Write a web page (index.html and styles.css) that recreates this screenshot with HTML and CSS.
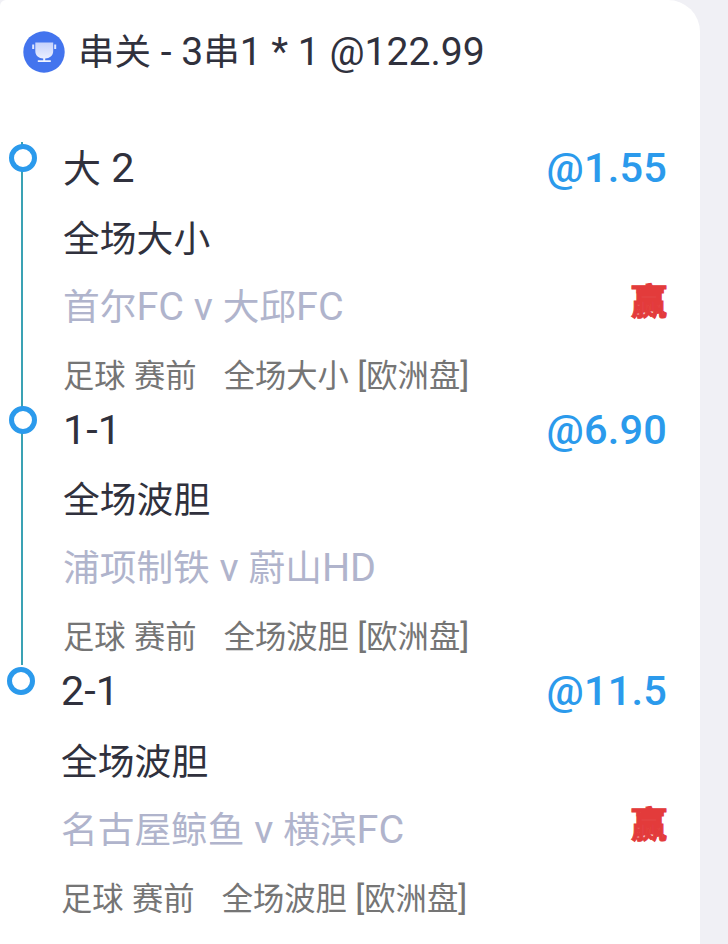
FILE: index.html
```html
<!DOCTYPE html>
<html lang="zh-CN">
<head>
    <meta charset="UTF-8">
    <meta name="viewport" content="width=device-width, initial-scale=1.0">
    <link rel="stylesheet" href="styles.css">
    <title>串关</title>
</head>
<body>
    <main class="card">
        <header class="card-header">
            <svg class="trophy" viewBox="0 0 42 42" aria-hidden="true">
                <defs>
                    <linearGradient id="cup" x1="0" y1="0" x2="0" y2="1">
                        <stop offset="0" stop-color="#c5d2fc"/>
                        <stop offset="1" stop-color="#f1f4ff"/>
                    </linearGradient>
                </defs>
                <circle cx="21" cy="21" r="20.7" fill="#4374ee"/>
                <path d="M9.2 13.6H11.2V18H9.2ZM31.2 13.6H33.2V18H31.2Z" fill="#dfe6fe"/>
                <path d="M12.3 11.5H30.2V20C30.2 25 26.5 27.3 22.2 27.5V29.2H27.8V31H14.8V29.2H20.2V27.5C16 27.3 12.3 25 12.3 20Z" fill="url(#cup)"/>
            </svg>
            <h1><span class="cn">串关</span> - 3<span class="cn">串</span>1 * 1 @122.99</h1>
        </header>
        <ul class="legs">
            <li class="leg">
                <div class="pick"><span><span class="cn">大</span> 2</span><strong class="odds">@1.55</strong></div>
                <div class="market">全场大小</div>
                <div class="match"><span>首尔<span class="en">FC v </span>大邱<span class="en">FC</span></span><b class="result">赢</b></div>
                <div class="info"><span>足球<span class="en"> </span>赛前</span><span>全场大小<span class="en"> [</span>欧洲盘<span class="en">]</span></span></div>
            </li>
            <li class="leg">
                <div class="pick"><span>1-1</span><strong class="odds">@6.90</strong></div>
                <div class="market">全场波胆</div>
                <div class="match"><span>浦项制铁<span class="en"> v </span>蔚山<span class="en">HD</span></span></div>
                <div class="info"><span>足球<span class="en"> </span>赛前</span><span>全场波胆<span class="en"> [</span>欧洲盘<span class="en">]</span></span></div>
            </li>
            <li class="leg">
                <div class="pick"><span>2-1</span><strong class="odds">@11.5</strong></div>
                <div class="market">全场波胆</div>
                <div class="match"><span>名古屋鲸鱼<span class="en"> v </span>横滨<span class="en">FC</span></span><b class="result">赢</b></div>
                <div class="info"><span>足球<span class="en"> </span>赛前</span><span>全场波胆<span class="en"> [</span>欧洲盘<span class="en">]</span></span></div>
            </li>
        </ul>
    </main>
</body>
</html>
```
FILE: styles.css
```css
*, ::after, ::before{
    margin: 0;
    padding: 0;
    box-sizing: border-box;
}
body{
    background-color: #f0f0f5;
    font-family: Roboto, 'Noto Sans CJK SC', sans-serif;
    color: #30313d;
    overflow: hidden;
}
.card{
    width: 700px;
    height: 944px;
    background-color: #fff;
    border-radius: 6px 32px 0 0;
    overflow: hidden;
}
.card-header{
    display: flex;
    align-items: center;
    gap: 13px;
    height: 104px;
    padding-left: 23px;
    h1{
        font-size: 39.1px;
        font-weight: 400;
        line-height: 60px;
        white-space: nowrap;
    }
    .cn{
        font-size: 36.5px;
    }
}
.trophy{
    width: 42px;
    height: 42px;
}
.legs{
    list-style: none;
    padding: 38px 34px 0 21px;
}
.leg{
    position: relative;
    height: 261.5px;
    padding-left: 40px;
    border-left: 2px solid #3aa2b4;
    &::before{
        content: '';
        position: absolute;
        left: -14px;
        top: 2px;
        width: 28px;
        height: 28px;
        border: 5px solid #2b9aec;
        border-radius: 50%;
        background-color: #fff;
    }
    &:last-child{
        border-left: none;
    }
}
.pick, .match{
    display: flex;
    justify-content: space-between;
}
.pick{
    height: 63.5px;
    font-size: 41.5px;
    line-height: 51px;
    .cn{
        font-size: 38px;
    }
}
.odds{
    margin-right: -1px;
    font-weight: 500;
    letter-spacing: 0.2px;
    color: #2b9aec;
}
.market{
    height: 67px;
    font-size: 36.8px;
    line-height: 68px;
}
.match{
    height: 68px;
    font-size: 36.7px;
    line-height: 68px;
    color: #b0b4cc;
    .en{
        font-size: 39.5px;
    }
}
.result{
    margin-right: -1px;
    font-size: 36px;
    font-weight: 900;
    line-height: 61px;
    color: #e33b3b;
    -webkit-text-stroke: 1px #e33b3b;
}
.info{
    display: flex;
    gap: 27px;
    font-size: 31.3px;
    line-height: 68px;
    color: #757575;
    .en{
        font-size: 34px;
    }
}
```
